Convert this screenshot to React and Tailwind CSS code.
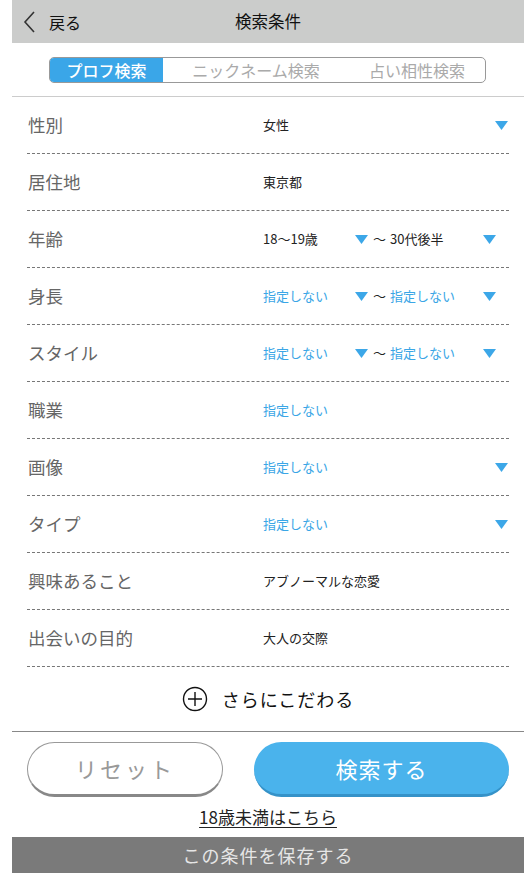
import React from "react";

const font = { fontFamily: '"Noto Sans CJK JP", "Noto Sans", sans-serif' };

const Tri = () => (
  <svg width="13" height="9" viewBox="0 0 13 9" className="shrink-0">
    <path d="M0 0 H13 L6.5 9 Z" fill="#3ca7e8" />
  </svg>
);

const rows = [
  { label: "性別", value: "女性", arrow: true },
  { label: "居住地", value: "東京都" },
  { label: "年齢", value: "18〜19歳", to: "30代後半" },
  { label: "身長", value: "指定しない", to: "指定しない", blue: true },
  { label: "スタイル", value: "指定しない", to: "指定しない", blue: true },
  { label: "職業", value: "指定しない", blue: true },
  { label: "画像", value: "指定しない", blue: true, arrow: true },
  { label: "タイプ", value: "指定しない", blue: true, arrow: true },
  { label: "興味あること", value: "アブノーマルな恋愛" },
  { label: "出会いの目的", value: "大人の交際" },
];

const Row = ({ r }) => {
  const vc = r.blue ? "text-[#3aa6e6]" : "text-[#222]";
  return (
    <div className="flex h-[57px] items-center border-b border-dashed border-[#777] pl-px">
      <div className="w-[235px] text-[17.5px] text-[#666]">{r.label}</div>
      {r.to ? (
        <div className="flex flex-1 items-center">
          <span className={`w-[92px] text-[13px] ${vc}`}>{r.value}</span>
          <Tri />
          <span className="ml-[5px] w-[17px] text-[13px] text-[#222]">〜</span>
          <span className={`w-[93px] text-[13px] ${vc}`}>{r.to}</span>
          <Tri />
        </div>
      ) : (
        <div className="flex flex-1 items-center justify-between pr-px">
          <span className={`text-[13px] ${vc}`}>{r.value}</span>
          {r.arrow && <Tri />}
        </div>
      )}
    </div>
  );
};

export default function App() {
  return (
    <div className="flex min-h-[873px] bg-white pl-[12px]" style={font}>
      <div className="flex w-[512px] flex-col">
        <header className="relative flex h-[43px] items-center bg-[#cbcccb] px-[11px]">
          <svg width="14" height="22" viewBox="0 0 14 22" className="mr-[12px]">
            <path d="M11 1 L2 11 L11 21" fill="none" stroke="#333" strokeWidth="1.6" />
          </svg>
          <span className="text-[16px] text-[#111]">戻る</span>
          <span className="absolute left-1/2 -translate-x-1/2 text-[16.5px] text-[#111]">検索条件</span>
        </header>

        <div className="flex h-[54px] items-center border-b border-[#ccc] pl-[37px]">
          <div className="flex h-[26px] w-[437px] overflow-hidden rounded-[5px] border border-[#999] text-[16px]">
            <div className="flex w-[113px] items-center justify-center bg-[#3aa6e8] font-medium text-white">プロフ検索</div>
            <div className="flex w-[186px] items-center justify-center text-[#aaa]">ニックネーム検索</div>
            <div className="flex flex-1 items-center justify-center text-[#aaa]">占い相性検索</div>
          </div>
        </div>

        <div className="px-[15px]">
          {rows.map((r) => (
            <Row key={r.label} r={r} />
          ))}
        </div>

        <div className="flex h-[65px] items-center justify-center gap-[14px] border-b border-[#888]">
          <svg width="26" height="26" viewBox="0 0 26 26">
            <circle cx="13" cy="13" r="11.5" fill="none" stroke="#111" strokeWidth="1.4" />
            <path d="M13 6 V20 M6 13 H20" stroke="#111" strokeWidth="1.4" />
          </svg>
          <span className="text-[18px] tracking-[1px] text-[#111]">さらにこだわる</span>
        </div>

        <div className="flex gap-[31px] px-[15px] pt-[10px]">
          <button className="flex h-[55px] w-[196px] items-center justify-center rounded-full border border-[#999] border-b-[3px] border-b-[#888] bg-white text-[22px] tracking-[3px] text-[#999]">
            リセット
          </button>
          <button className="flex h-[55px] flex-1 items-center justify-center rounded-full border-b-[3px] border-b-[#3592c8] bg-[#4ab3ec] text-[22px] tracking-[1px] text-white">
            検索する
          </button>
        </div>

        <div className="flex h-[40px] items-center justify-center">
          <span className="text-[17px] text-[#222] underline underline-offset-[3px]">18歳未満はこちら</span>
        </div>

        <div className="flex h-[36px] items-center justify-center bg-[#7a7a7a] text-[18px] tracking-[1px] text-[#e6e6e6]">
          この条件を保存する
        </div>
      </div>
    </div>
  );
}
